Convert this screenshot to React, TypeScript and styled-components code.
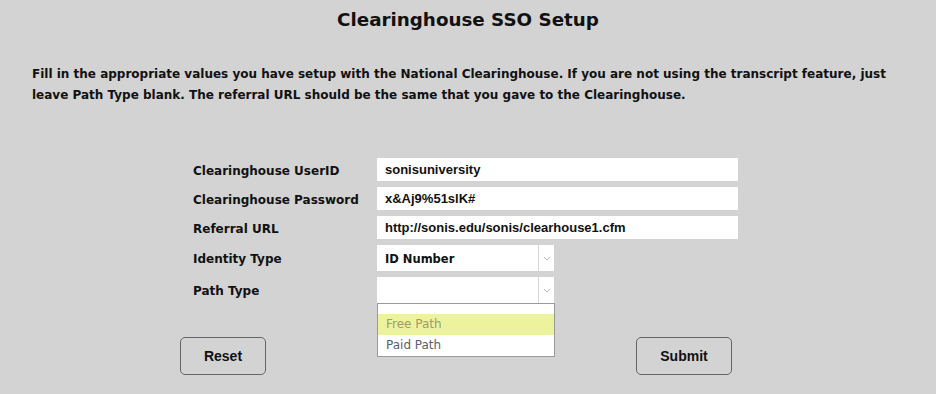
import React from 'react';
import styled, { createGlobalStyle } from 'styled-components';

const GlobalStyle = createGlobalStyle`
  html, body {
    margin: 0;
    padding: 0;
    background: #d3d3d3;
  }
  body {
    font-family: "DejaVu Sans", "Lato", sans-serif;
    color: #111;
  }
`;

const Page = styled.div`
  width: 936px;
  height: 394px;
  box-sizing: border-box;
  padding-top: 8px;
  background: #d3d3d3;
  overflow: hidden;
`;

const Title = styled.h1`
  margin: 0;
  font-size: 18.3px;
  line-height: 24px;
  font-weight: 700;
  text-align: center;
  color: #111;
`;

const Intro = styled.p`
  margin: 32px 0 0 32px;
  width: 870px;
  font-size: 12px;
  line-height: 21px;
  font-weight: 700;
  color: #111;
`;

const Form = styled.div`
  margin: 52px 0 0 193px;
  display: flex;
  flex-direction: column;
  gap: 6px;
`;

const Row = styled.div<{ $h: number }>`
  display: flex;
  align-items: center;
  height: ${(p) => p.$h}px;
`;

const Label = styled.label`
  width: 184px;
  padding-top: 2px;
  font-size: 12px;
  font-weight: 700;
  color: #111;
`;

const TextInput = styled.div`
  width: 361px;
  height: 23px;
  box-sizing: border-box;
  padding-left: 8px;
  background: #fff;
  display: flex;
  align-items: center;
  font-family: "Liberation Sans", Arial, sans-serif;
  font-size: 13px;
  font-weight: 700;
  color: #111;
`;

const SelectBox = styled.div`
  position: relative;
  width: 177px;
  height: 26px;
  box-sizing: border-box;
  background: #fff;
  display: flex;
  align-items: center;
`;

const SelectValue = styled.div`
  flex: 1;
  padding: 2px 0 0 8px;
  font-size: 11.5px;
  font-weight: 700;
  color: #111;
`;

const Arrow = styled.div`
  width: 15px;
  height: 100%;
  border-left: 1px solid #d6d6d6;
  display: flex;
  align-items: center;
  justify-content: center;
`;

const Menu = styled.div`
  position: absolute;
  top: 26px;
  left: 0;
  width: 178px;
  box-sizing: border-box;
  border: 1px solid #9a9a9a;
  background: #fff;
  z-index: 2;
`;

const Option = styled.div<{ $h: number; $active?: boolean }>`
  height: ${(p) => p.$h}px;
  line-height: ${(p) => p.$h}px;
  padding-left: 8px;
  font-size: 12px;
  background: ${(p) => (p.$active ? '#edf39c' : '#fff')};
  color: ${(p) => (p.$active ? '#9c9c6e' : '#5a6070')};
`;

const Buttons = styled.div`
  display: flex;
  margin: 34px 0 0 180px;
  width: 552px;
  justify-content: space-between;
`;

const Button = styled.button<{ $w: number }>`
  width: ${(p) => p.$w}px;
  height: 38px;
  background: #d3d3d3;
  border: 1px solid #666;
  border-radius: 5px;
  font-family: "Liberation Sans", Arial, sans-serif;
  font-size: 14px;
  font-weight: 700;
  color: #111;
  cursor: pointer;
`;

const Chevron = () => (
  <svg width="8" height="5" viewBox="0 0 8 5">
    <path d="M1 1l3 3 3-3" fill="none" stroke="#b5b5b5" strokeWidth="1" />
  </svg>
);

const App: React.FC = () => {
  return (
    <Page>
      <GlobalStyle />
      <Title>Clearinghouse SSO Setup</Title>
      <Intro>
        Fill in the appropriate values you have setup with the National Clearinghouse. If you are not using the transcript feature, just
        leave Path Type blank. The referral URL should be the same that you gave to the Clearinghouse.
      </Intro>

      <Form>
        <Row $h={23}>
          <Label>Clearinghouse UserID</Label>
          <TextInput>sonisuniversity</TextInput>
        </Row>
        <Row $h={23}>
          <Label>Clearinghouse Password</Label>
          <TextInput>x&amp;Aj9%51slK#</TextInput>
        </Row>
        <Row $h={23}>
          <Label>Referral URL</Label>
          <TextInput>http://sonis.edu/sonis/clearhouse1.cfm</TextInput>
        </Row>
        <Row $h={26}>
          <Label>Identity Type</Label>
          <SelectBox>
            <SelectValue>ID Number</SelectValue>
            <Arrow>
              <Chevron />
            </Arrow>
          </SelectBox>
        </Row>
        <Row $h={26}>
          <Label>Path Type</Label>
          <SelectBox>
            <SelectValue />
            <Arrow>
              <Chevron />
            </Arrow>
            <Menu>
              <Option $h={10} />
              <Option $h={21} $active>Free Path</Option>
              <Option $h={21}>Paid Path</Option>
            </Menu>
          </SelectBox>
        </Row>
      </Form>

      <Buttons>
        <Button $w={86}>Reset</Button>
        <Button $w={96}>Submit</Button>
      </Buttons>
    </Page>
  );
};

export default App;
